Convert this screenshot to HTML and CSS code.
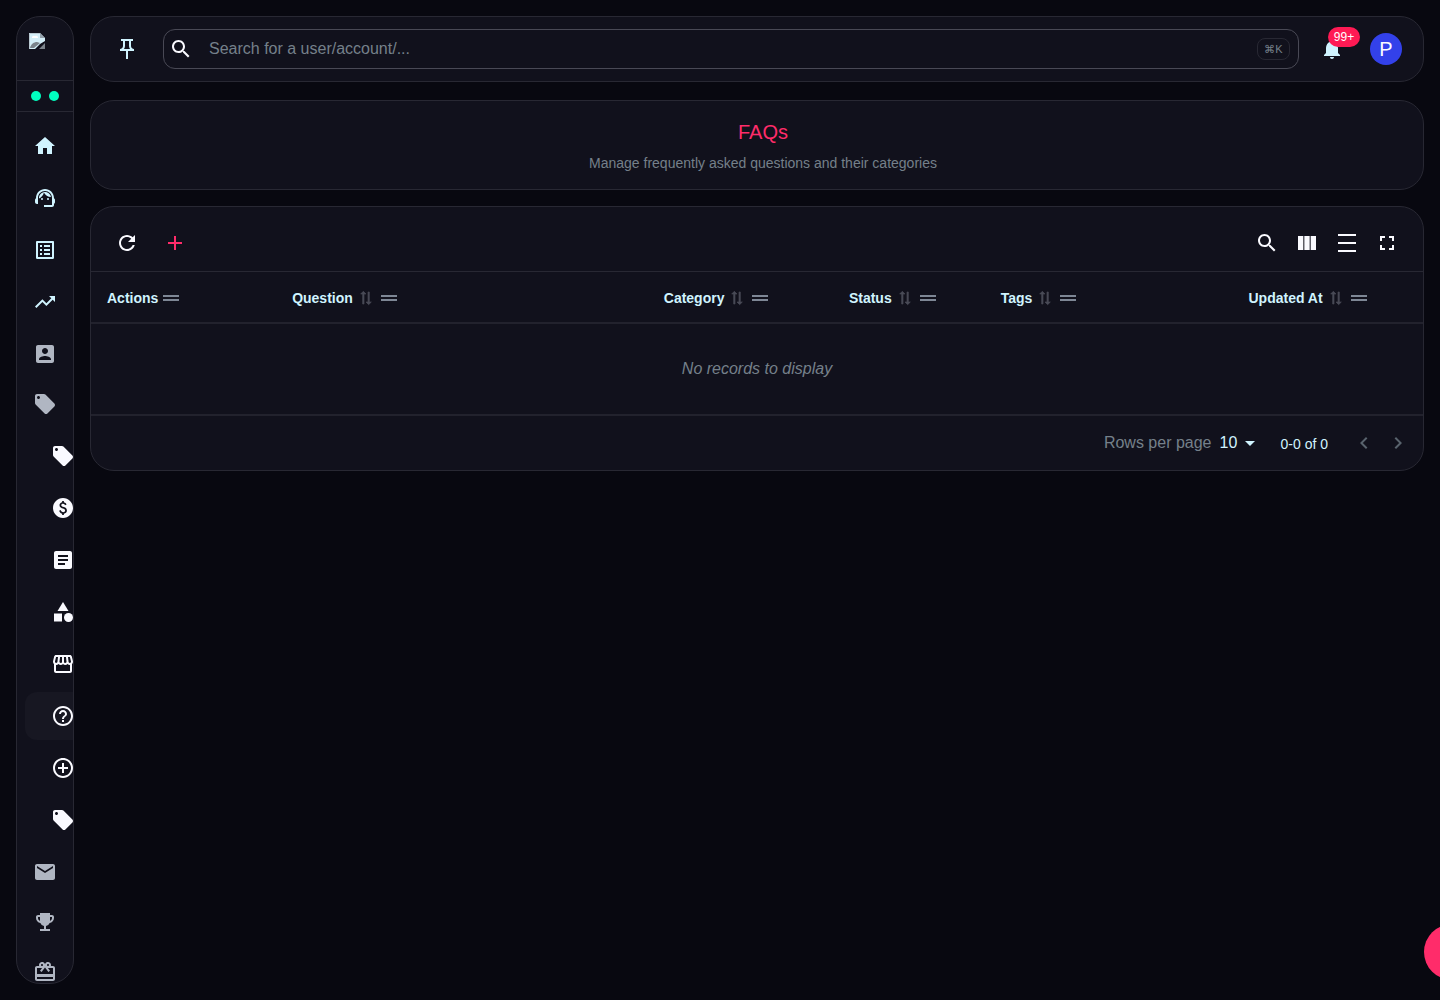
FILE: index.html
```html
<!DOCTYPE html>
<html lang="en">
<head>
<meta charset="utf-8">
<meta name="viewport" content="width=device-width, initial-scale=1">
<title>FAQs</title>
<link rel="stylesheet" href="styles.css">
</head>
<body>
<svg class="sprite" aria-hidden="true">
  <symbol id="tag" viewBox="0 0 24 24"><path d="m21.41 11.58-9-9C12.05 2.22 11.55 2 11 2H4c-1.1 0-2 .9-2 2v7c0 .55.22 1.05.59 1.42l9 9c.36.36.86.58 1.41.58.55 0 1.05-.22 1.41-.59l7-7c.37-.36.59-.86.59-1.41 0-.55-.23-1.06-.59-1.42zM5.5 7C4.67 7 4 6.33 4 5.5S4.67 4 5.5 4 7 4.67 7 5.5 6.33 7 5.5 7z"/></symbol>
  <symbol id="search" viewBox="0 0 24 24"><path d="M15.5 14h-.79l-.28-.27C15.41 12.59 16 11.11 16 9.5 16 5.91 13.09 3 9.5 3S3 5.91 3 9.5 5.91 16 9.5 16c1.61 0 3.09-.59 4.23-1.57l.27.28v.79l5 4.99L20.49 19l-4.99-5zm-6 0C7.01 14 5 11.99 5 9.5S7.01 5 9.5 5 14 7.01 14 9.5 11.99 14 9.5 14z"/></symbol>
  <symbol id="sort" viewBox="0 0 24 24"><path transform="rotate(-90 12 12)" d="m22 8-4-4v3H3v2h15v3l4-4zM2 16l4 4v-3h15v-2H6v-3l-4 4z"/></symbol>
  <symbol id="handle" viewBox="0 0 24 24"><path d="M20 9H4v2h16V9zM4 15h16v-2H4v2z"/></symbol>
</svg>
<div class="app">
  <aside class="sidebar">
    <a class="logo" href="#" aria-label="Logo">
      <svg class="logo-icon" viewBox="0 0 16 16"><path fill="#d4eef8" d="M0 0h11l5 5v3l-5 3-5 5H0z"/><path fill="#93a0aa" d="M11 0l5 5h-5z"/><path fill="#fff" d="M3 5a2 2 0 0 1 3-2 2 2 0 0 1 3 2z"/><path fill="#7b838b" d="M1 15c1-4 4-6 7-6l3 1-6 5zM10 16l6-6v6z"/><path fill="none" stroke="#b9c9d2" d="M.5 16V.5H11"/></svg>
    </a>
    <div class="status"><span class="dot"></span><span class="dot"></span></div>
    <nav class="nav" aria-label="Main">
      <ul class="nav-list">
        <li><a class="nav-item" href="#" aria-label="Home"><svg class="icon" viewBox="0 0 24 24"><path d="M10 20v-6h4v6h5v-8h3L12 3 2 12h3v8z"/></svg></a></li>
        <li><a class="nav-item" href="#" aria-label="Support"><svg class="icon" viewBox="0 0 24 24"><path d="M21 12.22C21 6.73 16.74 3 12 3c-4.69 0-9 3.65-9 9.28-.6.34-1 .98-1 1.72v2c0 1.1.9 2 2 2h1v-6.1c0-3.87 3.13-7 7-7s7 3.13 7 7V19h-8v2h8c1.1 0 2-.9 2-2v-1.22c.59-.31 1-.92 1-1.64v-2.3c0-.7-.41-1.31-1-1.62z"/><circle cx="9" cy="13" r="1"/><circle cx="15" cy="13" r="1"/><path d="M18 11.03C17.52 8.18 15.04 6 12.05 6c-3.03 0-6.29 2.51-6.03 6.45 2.47-1.01 4.33-3.21 4.86-5.89 1.31 2.63 4 4.44 7.12 4.47z"/></svg></a></li>
        <li><a class="nav-item" href="#" aria-label="Lists"><svg class="icon" viewBox="0 0 24 24"><path d="M19 5v14H5V5h14m1.1-2H3.9c-.5 0-.9.4-.9.9v16.2c0 .4.4.9.9.9h16.2c.4 0 .9-.5.9-.9V3.9c0-.5-.5-.9-.9-.9zM11 7h6v2h-6V7zm0 4h6v2h-6v-2zm0 4h6v2h-6zM7 7h2v2H7zm0 4h2v2H7zm0 4h2v2H7z"/></svg></a></li>
        <li><a class="nav-item" href="#" aria-label="Trends"><svg class="icon" viewBox="0 0 24 24"><path d="m16 6 2.29 2.29-4.88 4.88-4-4L2 16.59 3.41 18l6-6 4 4 6.3-6.29L22 12V6z"/></svg></a></li>
      </ul>
      <ul class="nav-list groups">
        <li><a class="nav-item" href="#" aria-label="Accounts"><svg class="icon" viewBox="0 0 24 24"><path d="M3 5v14c0 1.1.89 2 2 2h14c1.1 0 2-.9 2-2V5c0-1.1-.9-2-2-2H5c-1.11 0-2 .9-2 2zm12 4c0 1.66-1.34 3-3 3s-3-1.34-3-3 1.34-3 3-3 3 1.34 3 3zm-9 8c0-2 4-3.1 6-3.1s6 1.1 6 3.1v1H6v-1z"/></svg></a></li>
        <li><a class="nav-item" href="#" aria-label="Catalog"><svg class="icon"><use href="#tag"/></svg></a>
          <ul class="nav-list sub">
            <li><a class="nav-item" href="#" aria-label="Offers"><svg class="icon"><use href="#tag"/></svg></a></li>
            <li><a class="nav-item" href="#" aria-label="Pricing"><svg class="icon" viewBox="0 0 24 24"><path d="M12 2C6.48 2 2 6.48 2 12s4.48 10 10 10 10-4.48 10-10S17.52 2 12 2zm.88 15.76V19h-1.75v-1.29c-.74-.18-2.39-.77-3.02-2.96l1.65-.67c.06.22.58 2.09 2.4 2.09.93 0 1.98-.48 1.98-1.61 0-.96-.7-1.46-2.28-2.03-1.1-.39-3.35-1.03-3.35-3.31 0-.1.01-2.4 2.62-2.96V5h1.75v1.24c1.84.32 2.51 1.79 2.66 2.23l-1.58.67c-.11-.35-.59-1.34-1.9-1.34-.7 0-1.81.37-1.81 1.39 0 .95.86 1.31 2.64 1.9 2.4.83 3.01 2.05 3.01 3.45 0 2.63-2.5 3.13-3.02 3.22z"/></svg></a></li>
            <li><a class="nav-item" href="#" aria-label="Articles"><svg class="icon" viewBox="0 0 24 24"><path d="M19 3H5c-1.1 0-2 .9-2 2v14c0 1.1.9 2 2 2h14c1.1 0 2-.9 2-2V5c0-1.1-.9-2-2-2zm-5 14H7v-2h7v2zm3-4H7v-2h10v2zm0-4H7V7h10v2z"/></svg></a></li>
            <li><a class="nav-item" href="#" aria-label="Categories"><svg class="icon" viewBox="0 0 24 24"><path d="m12 2-5.5 9h11z"/><circle cx="17.5" cy="17.5" r="4.5"/><path d="M3 13.5h8v8H3z"/></svg></a></li>
            <li><a class="nav-item" href="#" aria-label="Store"><svg class="icon" viewBox="0 0 24 24"><path d="m21.9 8.89-1.05-4.37c-.22-.9-1-1.52-1.91-1.52H5.05c-.9 0-1.69.63-1.9 1.52L2.1 8.89c-.24 1.02-.02 2.06.62 2.88.08.11.19.19.28.29V19c0 1.1.9 2 2 2h14c1.1 0 2-.9 2-2v-6.94c.09-.09.2-.18.28-.28.64-.82.87-1.87.62-2.89zm-2.99-3.9 1.05 4.37c.1.42.01.84-.25 1.17-.14.18-.44.47-.94.47-.61 0-1.14-.49-1.21-1.14L16.98 5l1.93-.01zM13 5h1.96l.54 4.52c.05.39-.07.78-.33 1.07-.22.26-.54.41-.95.41-.67 0-1.22-.59-1.22-1.31V5zM8.49 9.52 9.04 5H11v4.69c0 .72-.55 1.31-1.29 1.31-.34 0-.65-.15-.89-.41-.25-.29-.37-.68-.33-1.07zm-4.45-.16L5.05 5h1.97l-.58 4.86c-.08.65-.6 1.14-1.21 1.14-.49 0-.8-.29-.93-.47-.27-.32-.36-.75-.26-1.17zM5 19v-6.03c.08.01.15.03.23.03.87 0 1.66-.36 2.24-.95.6.6 1.4.95 2.31.95.87 0 1.65-.36 2.23-.93.59.57 1.39.93 2.29.93.84 0 1.64-.35 2.24-.95.58.59 1.37.95 2.24.95.08 0 .15-.02.23-.03V19H5z"/></svg></a></li>
            <li><a class="nav-item active" href="#" aria-label="FAQs" aria-current="page"><svg class="icon" viewBox="0 0 24 24"><path d="M11 18h2v-2h-2v2zm1-16C6.48 2 2 6.48 2 12s4.48 10 10 10 10-4.48 10-10S17.52 2 12 2zm0 18c-4.41 0-8-3.59-8-8s3.59-8 8-8 8 3.59 8 8-3.59 8-8 8zm0-14c-2.21 0-4 1.79-4 4h2c0-1.1.9-2 2-2s2 .9 2 2c0 2-3 1.75-3 5h2c0-2.25 3-2.5 3-5 0-2.21-1.79-4-4-4z"/></svg></a></li>
            <li><a class="nav-item" href="#" aria-label="Add"><svg class="icon" viewBox="0 0 24 24"><path d="M13 7h-2v4H7v2h4v4h2v-4h4v-2h-4V7zm-1-5C6.48 2 2 6.48 2 12s4.48 10 10 10 10-4.48 10-10S17.52 2 12 2zm0 18c-4.41 0-8-3.59-8-8s3.59-8 8-8 8 3.59 8 8-3.59 8-8 8z"/></svg></a></li>
            <li><a class="nav-item" href="#" aria-label="Tags"><svg class="icon"><use href="#tag"/></svg></a></li>
          </ul>
        </li>
        <li><a class="nav-item" href="#" aria-label="Mail"><svg class="icon" viewBox="0 0 24 24"><path d="M20 4H4c-1.1 0-1.99.9-1.99 2L2 18c0 1.1.9 2 2 2h16c1.1 0 2-.9 2-2V6c0-1.1-.9-2-2-2zm0 4-8 5-8-5V6l8 5 8-5v2z"/></svg></a></li>
        <li><a class="nav-item" href="#" aria-label="Rewards"><svg class="icon" viewBox="0 0 24 24"><path d="M19 5h-2V3H7v2H5c-1.1 0-2 .9-2 2v1c0 2.55 1.92 4.63 4.39 4.94.63 1.5 1.98 2.63 3.61 2.96V19H7v2h10v-2h-4v-3.1c1.63-.33 2.98-1.46 3.61-2.96C19.08 12.63 21 10.55 21 8V7c0-1.1-.9-2-2-2zM5 8V7h2v3.82C5.84 10.4 5 9.3 5 8zm14 0c0 1.3-.84 2.4-2 2.82V7h2v1z"/></svg></a></li>
        <li><a class="nav-item" href="#" aria-label="Gifts"><svg class="icon" viewBox="0 0 24 24"><path d="M20 6h-2.18c.11-.31.18-.65.18-1 0-1.66-1.34-3-3-3-1.05 0-1.96.54-2.5 1.35l-.5.67-.5-.68C10.96 2.54 10.05 2 9 2 7.34 2 6 3.34 6 5c0 .35.07.69.18 1H4c-1.11 0-1.99.89-1.99 2L2 19c0 1.11.89 2 2 2h16c1.11 0 2-.89 2-2V8c0-1.11-.89-2-2-2zm-5-2c.55 0 1 .45 1 1s-.45 1-1 1-1-.45-1-1 .45-1 1-1zM9 4c.55 0 1 .45 1 1s-.45 1-1 1-1-.45-1-1 .45-1 1-1zm11 15H4v-2h16v2zm0-5H4V8h5.08L7 10.83 8.62 12 11 8.76l1-1.36 1 1.36L15.38 12 17 10.83 14.92 8H20v6z"/></svg></a></li>
      </ul>
    </nav>
  </aside>

  <div class="content">
    <header class="panel topbar">
      <button class="icon-btn" type="button" aria-label="Pin menu"><svg class="icon" viewBox="0 0 24 24"><path d="M14 4v5c0 1.12.37 2.16 1 3H9c.65-.86 1-1.9 1-3V4h4m4-2H6v2h2v5c0 1.66-1.34 3-3 3v2h6v8h2v-8h6v-2c-1.66 0-3-1.34-3-3V4h2V2z"/></svg></button>
      <label class="search">
        <svg class="icon"><use href="#search"/></svg>
        <input class="search-input" type="text" placeholder="Search for a user/account/..." aria-label="Search">
        <kbd class="key">⌘K</kbd>
      </label>
      <button class="icon-btn bell" type="button" aria-label="Notifications"><svg class="icon" viewBox="0 0 24 24"><path d="M12 22c1.1 0 2-.9 2-2h-4c0 1.1.89 2 2 2zm6-6v-5c0-3.07-1.64-5.64-4.5-6.32V4c0-.83-.67-1.5-1.5-1.5s-1.5.67-1.5 1.5v.68C7.63 5.36 6 7.92 6 11v5l-2 2v1h16v-1l-2-2z"/></svg><span class="badge">99+</span></button>
      <button class="avatar" type="button" aria-label="Profile">P</button>
    </header>

    <main class="main">
      <section class="panel title-card">
        <h1 class="title">FAQs</h1>
        <p class="subtitle">Manage frequently asked questions and their categories</p>
      </section>

      <section class="panel table-card">
        <div class="toolbar">
          <div class="tools left">
            <button class="icon-btn" type="button" aria-label="Refresh"><svg class="icon" viewBox="0 0 24 24"><path d="M17.65 6.35C16.2 4.9 14.21 4 12 4c-4.42 0-7.99 3.58-7.99 8s3.57 8 7.99 8c3.73 0 6.84-2.55 7.73-6h-2.08c-.82 2.33-3.04 4-5.65 4-3.31 0-6-2.69-6-6s2.69-6 6-6c1.66 0 3.14.69 4.22 1.78L13 11h7V4l-2.35 2.35z"/></svg></button>
            <button class="icon-btn add" type="button" aria-label="Add FAQ"><svg class="icon" viewBox="0 0 24 24"><path d="M19 13h-6v6h-2v-6H5v-2h6V5h2v6h6v2z"/></svg></button>
          </div>
          <div class="tools">
            <button class="icon-btn" type="button" aria-label="Show search"><svg class="icon"><use href="#search"/></svg></button>
            <button class="icon-btn" type="button" aria-label="Columns"><svg class="icon" viewBox="0 0 24 24"><path d="M14.67 5v14H9.33V5h5.34zm1 14H21V5h-5.33v14zm-7.34 0V5H3v14h5.33z"/></svg></button>
            <button class="icon-btn" type="button" aria-label="Density"><svg class="icon" viewBox="0 0 24 24"><path d="M3 3h18v2H3zM3 11h18v2H3zM3 19h18v2H3z"/></svg></button>
            <button class="icon-btn" type="button" aria-label="Full screen"><svg class="icon" viewBox="0 0 24 24"><path d="M7 14H5v5h5v-2H7v-3zm-2-4h2V7h3V5H5v5zm12 7h-3v2h5v-5h-2v3zM14 5v2h3v3h2V5h-5z"/></svg></button>
          </div>
        </div>
        <table class="table">
          <colgroup><col class="c-actions"><col class="c-question"><col class="c-category"><col class="c-status"><col class="c-tags"><col class="c-updated"></colgroup>
          <thead>
            <tr>
              <th scope="col"><div class="head">Actions<svg class="handle"><use href="#handle"/></svg></div></th>
              <th scope="col"><div class="head">Question<svg class="sort"><use href="#sort"/></svg><svg class="handle"><use href="#handle"/></svg></div></th>
              <th scope="col"><div class="head">Category<svg class="sort"><use href="#sort"/></svg><svg class="handle"><use href="#handle"/></svg></div></th>
              <th scope="col"><div class="head">Status<svg class="sort"><use href="#sort"/></svg><svg class="handle"><use href="#handle"/></svg></div></th>
              <th scope="col"><div class="head">Tags<svg class="sort"><use href="#sort"/></svg><svg class="handle"><use href="#handle"/></svg></div></th>
              <th scope="col"><div class="head">Updated At<svg class="sort"><use href="#sort"/></svg><svg class="handle"><use href="#handle"/></svg></div></th>
            </tr>
          </thead>
          <tbody>
            <tr><td class="empty" colspan="6">No records to display</td></tr>
          </tbody>
        </table>
        <div class="pager">
          <label class="rows-label" for="rows">Rows per page</label>
          <div class="select-wrap">
            <select class="select" id="rows"><option>10</option><option>25</option><option>50</option></select>
            <svg class="icon caret" viewBox="0 0 24 24"><path d="m7 10 5 5 5-5z"/></svg>
          </div>
          <span class="range">0-0 of 0</span>
          <div class="pages">
            <button class="page-btn" type="button" disabled aria-label="Previous page"><svg class="icon" viewBox="0 0 24 24"><path d="M15.41 7.41 14 6l-6 6 6 6 1.41-1.41L10.83 12z"/></svg></button>
            <button class="page-btn" type="button" disabled aria-label="Next page"><svg class="icon" viewBox="0 0 24 24"><path d="M10 6 8.59 7.41 13.17 12l-4.58 4.59L10 18l6-6z"/></svg></button>
          </div>
        </div>
      </section>
    </main>
  </div>
</div>
<button class="fab" type="button" aria-label="Open chat"></button>
</body>
</html>
```

FILE: styles.css
```css
:root {
  --bg: #080810;
  --panel: #11111c;
  --line: #282833;
  --text: #d0f4ff;
  --muted: #75808a;
  --white: #fafaff;
  --accent: #ff2c6a;
}

* { box-sizing: border-box; }

body {
  margin: 0;
  overflow-x: hidden;
  background: var(--bg);
  color: var(--text);
  font-family: "Liberation Sans", Arial, sans-serif;
  font-size: 16px;
}

button {
  margin: 0;
  padding: 0;
  border: 0;
  background: none;
  color: inherit;
  font: inherit;
}

.sprite { display: none; }

.icon {
  flex: none;
  display: block;
  width: 24px;
  height: 24px;
  fill: currentColor;
}

.app {
  display: flex;
  align-items: flex-start;
  gap: 16px;
  padding: 16px;
}

/* Sidebar */
.sidebar {
  position: sticky;
  top: 16px;
  flex: none;
  display: flex;
  flex-direction: column;
  width: 58px;
  height: calc(100vh - 32px);
  overflow: hidden;
  border: 1px solid var(--line);
  border-radius: 24px;
  background: var(--panel);
}

.logo {
  flex: none;
  height: 64px;
  padding: 16px 12px;
  border-bottom: 1px solid var(--line);
}

.logo-icon {
  display: block;
  width: 16px;
  height: 16px;
}

.status {
  flex: none;
  display: flex;
  align-items: center;
  justify-content: center;
  gap: 8px;
  height: 31px;
  border-bottom: 1px solid var(--line);
}

.dot {
  width: 10px;
  height: 10px;
  border-radius: 50%;
  background: #00ffc0;
}

.nav {
  flex: 1;
  min-height: 0;
  overflow: hidden;
  padding: 10px 0 0 8px;
}

.nav-list {
  display: flex;
  flex-direction: column;
  gap: 4px;
  margin: 0;
  padding: 0;
  list-style: none;
}

.groups {
  gap: 2px;
  padding-top: 4px;
  color: #b0b6c2;
}

.sub {
  padding: 4px 0 2px;
  color: var(--white);
}

.nav-item {
  display: flex;
  align-items: center;
  height: 48px;
  padding-left: 8px;
  color: inherit;
}

.sub .nav-item { padding-left: 26px; }

.active {
  border-radius: 12px 0 0 12px;
  background: #171722;
}

/* Content */
.content {
  flex: 1;
  min-width: 0;
}

.panel {
  border: 1px solid var(--line);
  border-radius: 24px;
  background: var(--panel);
}

.icon-btn {
  flex: none;
  display: flex;
  align-items: center;
  justify-content: center;
  width: 40px;
  height: 40px;
}

.topbar {
  display: flex;
  align-items: center;
  height: 66px;
  padding: 0 21px 0 16px;
}

.search {
  flex: 1;
  display: flex;
  align-items: center;
  min-width: 0;
  height: 40px;
  margin: 0 13px 0 16px;
  padding: 0 8px 0 5px;
  border: 1px solid #494955;
  border-radius: 12px;
  color: var(--white);
}

.search-input {
  flex: 1;
  min-width: 0;
  padding: 0 16px;
  border: 0;
  outline: 0;
  background: none;
  color: var(--text);
  font: inherit;
}

.search-input::placeholder {
  color: var(--muted);
  opacity: 1;
}

.key {
  width: 33px;
  border: 1px solid var(--line);
  border-radius: 8px;
  color: var(--muted);
  font-family: inherit;
  font-size: 11px;
  line-height: 20px;
  text-align: center;
}

.bell { position: relative; }

.badge {
  position: absolute;
  top: -2px;
  left: 16px;
  min-width: 32px;
  border-radius: 10px;
  background: #ff1a54;
  color: #fff;
  font-size: 12px;
  line-height: 20px;
}

.avatar {
  width: 32px;
  height: 32px;
  margin-left: 18px;
  border-radius: 50%;
  background: #3341ea;
  color: var(--white);
  font-size: 20px;
  line-height: 32px;
}

.main {
  display: flex;
  flex-direction: column;
  gap: 16px;
  margin-top: 18px;
}

.title-card {
  padding: 15px 0 16px 12px;
  text-align: center;
}

.title {
  margin: 0;
  color: var(--accent);
  font-size: 20px;
  font-weight: 400;
  line-height: 32px;
}

.subtitle {
  margin: 5px 0 0;
  color: var(--muted);
  font-size: 14px;
  line-height: 20px;
}

/* Table */
.toolbar {
  display: flex;
  justify-content: space-between;
  padding: 16px 16px 8px;
  color: var(--white);
}

.tools { display: flex; }
.left { gap: 8px; }
.add { color: var(--accent); }

.table {
  width: 100%;
  border-collapse: separate;
  border-spacing: 0;
  table-layout: fixed;
}

.c-actions, .c-category { width: 13.9%; }
.c-question { width: 27.9%; }
.c-status { width: 11.4%; }
.c-tags { width: 18.6%; }
.c-updated { width: 14.3%; }

.table th {
  height: 53px;
  padding: 2px 16px 0;
  border-top: 1px solid var(--line);
  border-bottom: 2px solid #22222d;
  font-size: 14px;
  text-align: left;
}

.head {
  display: flex;
  align-items: center;
  gap: 1px;
  white-space: nowrap;
}

.sort {
  flex: none;
  width: 16px;
  height: 16px;
  margin: 0 2px 0 4px;
  fill: #484a56;
  stroke: #484a56;
}

.handle {
  flex: none;
  width: 24px;
  height: 24px;
  fill: #7e8795;
}

.empty {
  height: 92px;
  padding: 0;
  border-bottom: 2px solid #22222d;
  color: var(--muted);
  font-style: italic;
  text-align: center;
}

.pager {
  display: flex;
  align-items: center;
  justify-content: flex-end;
  height: 54px;
  padding-right: 8px;
}

.rows-label {
  margin-right: 8px;
  color: var(--muted);
}

.select-wrap {
  display: grid;
  align-items: center;
  width: 42px;
}

.select {
  grid-area: 1 / 1;
  margin: 0;
  padding: 0 0 2px;
  border: 0;
  appearance: none;
  background: none;
  color: var(--text);
  font: inherit;
}

.caret {
  grid-area: 1 / 1;
  justify-self: end;
  pointer-events: none;
}

.range {
  margin: 0 19px;
  padding-top: 2px;
  font-size: 14px;
}

.pages { display: flex; }

.page-btn {
  padding: 5px;
  color: #59636d;
}

.fab {
  position: fixed;
  right: -40px;
  bottom: 20px;
  width: 56px;
  height: 56px;
  border-radius: 50%;
  background: var(--accent);
}
```
